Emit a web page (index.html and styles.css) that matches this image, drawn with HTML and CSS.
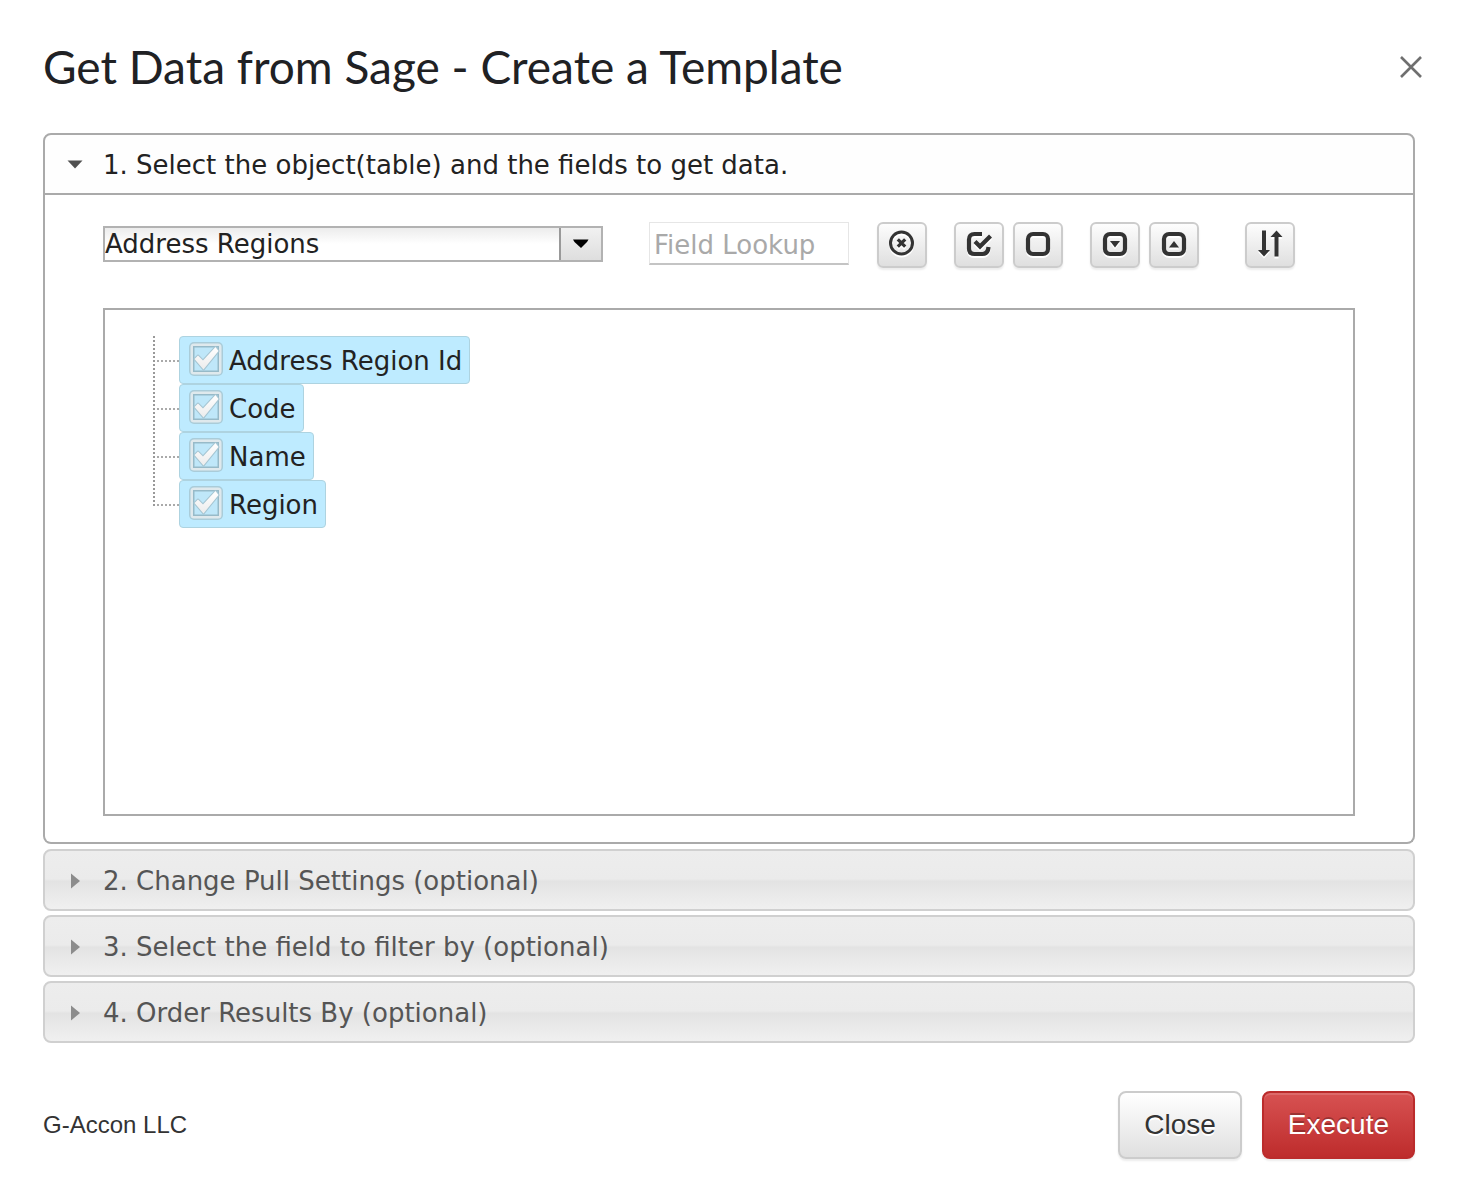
FILE: index.html
```html
<!DOCTYPE html>
<html lang="en">
<head>
<meta charset="utf-8">
<title>Get Data from Sage - Create a Template</title>
<link rel="stylesheet" href="styles.css">
</head>
<body>
<main class="dialog">
  <header class="dialog-header">
    <h1 class="dialog-title">Get Data from Sage - Create a Template</h1>
    <button class="dismiss" type="button" aria-label="Close dialog">
      <svg width="22" height="22" viewBox="0 0 22 22" fill="none" stroke="#6f6f6f" stroke-width="2.6"><path d="M1 1L21 21M21 1L1 21"/></svg>
    </button>
  </header>

  <div class="accordion">
    <details class="section" open>
      <summary class="section-header">
        <svg class="marker" width="16" height="16" viewBox="0 0 16 16"><path d="M0.500 3.500H15.500L8 11.500Z" fill="#505050"/></svg>
        <span>1. Select the object(table) and the fields to get data.</span>
      </summary>
      <div class="section-body">
        <div class="toolbar">
          <div class="combo">
            <select class="combo-select" aria-label="Object">
              <option>Address Regions</option>
            </select>
            <span class="combo-arrow"><svg width="16" height="10" viewBox="0 0 16 10"><path d="M0 0.500H15.500L14 3L8 9L1.500 3Z" fill="#000"/></svg></span>
          </div>
          <input class="lookup" type="text" placeholder="Field Lookup" aria-label="Field Lookup">
          <button class="tool" type="button" aria-label="Clear lookup">
            <svg width="26" height="28" viewBox="0 0 26 28" fill="none" stroke="#333"><circle cx="12.500" cy="13" r="11" stroke-width="3"/><path d="M8.800 9.300L16.200 16.700M16.200 9.300L8.800 16.700" stroke-width="3.200"/></svg>
          </button>
          <div class="tool-group">
            <button class="tool" type="button" aria-label="Select all">
              <svg width="26" height="26" viewBox="0 0 26 26" fill="none" stroke="#333" stroke-width="4.200"><path d="M16 3H8.500Q3 3 3 8.500V17.500Q3 23 8.500 23H16.500Q22 23 22.500 16"/><path d="M9 10.500L14 15.500L24.500 5"/></svg>
            </button>
            <button class="tool" type="button" aria-label="Select none">
              <svg width="26" height="26" viewBox="0 0 26 26" fill="none" stroke="#333" stroke-width="4.200"><rect x="3" y="3" width="20" height="20" rx="5"/></svg>
            </button>
          </div>
          <div class="tool-group">
            <button class="tool" type="button" aria-label="Expand all">
              <svg width="26" height="26" viewBox="0 0 26 26" fill="none" stroke="#333" stroke-width="4.200"><rect x="3" y="3" width="20" height="20" rx="5"/><path d="M8 10H18L13 16.500Z" fill="#333" stroke="none"/></svg>
            </button>
            <button class="tool" type="button" aria-label="Collapse all">
              <svg width="26" height="26" viewBox="0 0 26 26" fill="none" stroke="#333" stroke-width="4.200"><rect x="3" y="3" width="20" height="20" rx="5"/><path d="M8 16.500H18L13 10Z" fill="#333" stroke="none"/></svg>
            </button>
          </div>
          <button class="tool tool-sort" type="button" aria-label="Sort">
            <svg width="26" height="28" viewBox="0 0 26 28"><path d="M5 0.500H9V20H13L7 26.500L1 20H5ZM17.500 26.500V7H13.500L19.500 0.500L25.500 7H21.500V26.500Z" fill="#333"/></svg>
          </button>
        </div>

        <svg class="symbols" width="0" height="0" aria-hidden="true">
          <defs>
            <linearGradient id="tick-fill" x1="0" y1="0" x2="0" y2="1"><stop offset="0" stop-color="#fff"/><stop offset="1" stop-color="#ececec"/></linearGradient>
            <symbol id="ticked" viewBox="0 0 34 34">
              <rect x="0" y="0" width="34" height="34" rx="5" fill="#aaccd9"/>
              <rect x="1.500" y="1.500" width="31" height="31" rx="3.500" fill="#dfe9ed"/>
              <rect x="4" y="4" width="26" height="26" fill="#97bac8"/>
              <rect x="5.500" y="5.500" width="23" height="23" fill="#bfe7f9"/>
              <path d="M5.500 17L9 13.500L14 18.500L26.500 5L29.500 9L14.500 27.500Z" fill="url(#tick-fill)" stroke="#a5c5d2" stroke-width="2" stroke-linejoin="round" paint-order="stroke"/>
            </symbol>
          </defs>
        </svg>

        <ul class="tree">
          <li class="node"><label class="field"><span class="tick"><input class="tick-input" type="checkbox" checked><svg class="tick-icon" width="34" height="34"><use href="#ticked"/></svg></span>Address Region Id</label></li>
          <li class="node"><label class="field"><span class="tick"><input class="tick-input" type="checkbox" checked><svg class="tick-icon" width="34" height="34"><use href="#ticked"/></svg></span>Code</label></li>
          <li class="node"><label class="field"><span class="tick"><input class="tick-input" type="checkbox" checked><svg class="tick-icon" width="34" height="34"><use href="#ticked"/></svg></span>Name</label></li>
          <li class="node"><label class="field"><span class="tick"><input class="tick-input" type="checkbox" checked><svg class="tick-icon" width="34" height="34"><use href="#ticked"/></svg></span>Region</label></li>
        </ul>
      </div>
    </details>

    <details class="section">
      <summary class="section-header">
        <svg class="marker" width="16" height="16" viewBox="0 0 16 16"><path d="M4 0.500L13 8L4 15.500Z" fill="#8c8c8c"/></svg>
        <span>2. Change Pull Settings (optional)</span>
      </summary>
    </details>
    <details class="section">
      <summary class="section-header">
        <svg class="marker" width="16" height="16" viewBox="0 0 16 16"><path d="M4 0.500L13 8L4 15.500Z" fill="#8c8c8c"/></svg>
        <span>3. Select the field to filter by (optional)</span>
      </summary>
    </details>
    <details class="section">
      <summary class="section-header">
        <svg class="marker" width="16" height="16" viewBox="0 0 16 16"><path d="M4 0.500L13 8L4 15.500Z" fill="#8c8c8c"/></svg>
        <span>4. Order Results By (optional)</span>
      </summary>
    </details>
  </div>

  <footer class="dialog-footer">
    <span class="vendor">G-Accon LLC</span>
    <div class="actions">
      <button class="btn" type="button">Close</button>
      <button class="btn btn-primary" type="button">Execute</button>
    </div>
  </footer>
</main>
</body>
</html>
```
FILE: styles.css
```css
* {
  box-sizing: border-box;
}

body {
  margin: 0;
  background: #fff;
  color: #222;
  font-family: Verdana, "DejaVu Sans", sans-serif;
  font-size: 26px;
  line-height: 36px;
}

svg {
  display: block;
}

.dialog {
  padding: 39px 55px 26px 43px;
}

.dialog-header {
  display: flex;
  align-items: center;
  justify-content: space-between;
  height: 56px;
}

.dialog-title {
  margin: 0;
  color: #202124;
  font-family: "Google Sans", Lato, sans-serif;
  font-size: 46px;
  font-weight: 400;
  line-height: 56px;
}

.dismiss {
  margin-right: -7px;
  padding: 0;
  border: 0;
  background: none;
}

.accordion {
  display: flex;
  flex-direction: column;
  gap: 4px;
  margin-top: 38px;
}

.section-header {
  display: flex;
  align-items: center;
  gap: 20px;
  height: 62px;
  padding: 2px 22px 0;
  border: 2px solid #d0d0d0;
  border-radius: 8px;
  background: linear-gradient(#ededed, #ebebeb 48%, #e3e3e3 52%, #f0f0f0);
  color: #555;
  list-style: none;
}

.section-header::-webkit-details-marker {
  display: none;
}

.section[open] {
  margin-bottom: 1px;
}

.section[open] .section-header {
  border-color: #aaa;
  border-radius: 8px 8px 0 0;
  background: #fefefe;
  color: #222;
}

.section-body {
  padding: 27px 58px 26px;
  border: 2px solid #aaa;
  border-top: 0;
  border-radius: 0 0 8px 8px;
}

.toolbar {
  display: flex;
  align-items: flex-start;
  gap: 27px;
  height: 46px;
}

.combo {
  display: grid;
  grid-template-columns: 1fr 42px;
  width: 500px;
  height: 36px;
  margin: 4px 19px 0 0;
  border: 2px solid #b2b2b2;
  background: linear-gradient(#ececec, #fff 50%);
}

.combo-select {
  grid-area: 1 / 1 / 2 / 3;
  appearance: none;
  padding: 0;
  border: 0;
  background: none;
  color: #222;
  font: inherit;
  line-height: 32px;
}

.combo-arrow {
  display: grid;
  grid-area: 1 / 2 / 2 / 3;
  place-items: center;
  border-left: 2px solid #999;
  background: linear-gradient(#f1f1f1, #dedede);
  pointer-events: none;
}

.lookup {
  width: 200px;
  height: 43px;
  margin-right: 1px;
  padding: 3px 4px 0;
  border: 1px solid #e6e6e6;
  border-bottom: 2px solid #c4c4c4;
  color: #222;
  font: inherit;
}

.lookup::placeholder {
  color: #a9a9a9;
  opacity: 1;
}

.tool-group {
  display: flex;
  gap: 9px;
}

.tool {
  display: flex;
  align-items: center;
  justify-content: center;
  width: 50px;
  height: 46px;
  padding: 0 0 3px;
  border: 2px solid #ccc;
  border-radius: 6px;
  background: linear-gradient(#fdfdfd, #dfdfdf);
  box-shadow: 0 2px 2px rgba(0, 0, 0, 0.08);
}

.tool svg {
  filter: drop-shadow(0 2px 0 #fff);
}

.tool-sort {
  margin-left: 19px;
}

.symbols {
  position: absolute;
}

.tree {
  height: 508px;
  margin: 40px 0 0;
  padding: 26px 48px;
  border: 2px solid #aaa;
  list-style: none;
}

.node {
  display: flex;
  height: 48px;
  background:
    repeating-linear-gradient(#999 0 2px, transparent 2px 4px) 0 0 / 2px 100% no-repeat,
    repeating-linear-gradient(90deg, #aaa 0 2px, transparent 2px 4px) 0 24px / 26px 2px no-repeat;
}

.node:last-child {
  background-size: 2px 26px, 26px 2px;
}

.field {
  display: flex;
  align-items: flex-start;
  gap: 6px;
  margin-left: 26px;
  padding: 5px 7px 0 9px;
  border: 1px solid #aed3e0;
  border-radius: 4px;
  background: #beebff;
  line-height: 38px;
}

.tick {
  display: grid;
}

.tick-input,
.tick-icon {
  grid-area: 1 / 1;
}

.tick-input {
  appearance: none;
  width: 34px;
  height: 34px;
  margin: 0;
}

.dialog-footer {
  display: flex;
  align-items: center;
  justify-content: space-between;
  margin-top: 48px;
  color: #333;
  font-family: Helvetica, "Liberation Sans", Arial, sans-serif;
  font-size: 24px;
}

.actions {
  display: flex;
  gap: 20px;
}

.btn {
  height: 68px;
  padding: 0 24px;
  border: 2px solid #ccc;
  border-radius: 8px;
  background: linear-gradient(#fff, #dfdfdf);
  box-shadow: 0 2px 2px rgba(0, 0, 0, 0.08);
  color: #333;
  font-family: inherit;
  font-size: 28px;
  text-shadow: 0 2px 0 #fff;
}

.btn-primary {
  border-color: #bb2b2b;
  background: linear-gradient(#d75252, #be2c2c);
  box-shadow: inset 0 2px 0 rgba(255, 255, 255, 0.15), 0 2px 2px rgba(0, 0, 0, 0.08);
  color: #fff;
  text-shadow: 0 -2px 0 rgba(0, 0, 0, 0.25);
}
```
